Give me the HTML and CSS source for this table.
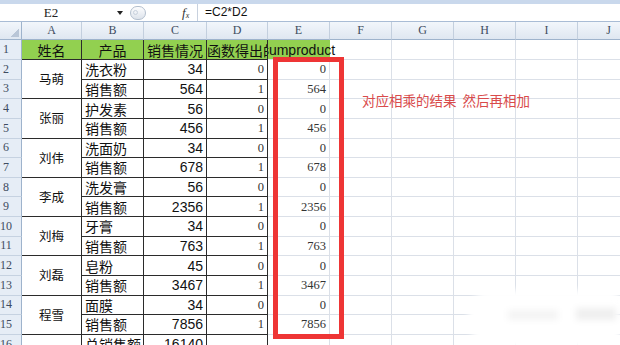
FILE: index.html
```html
<!DOCTYPE html>
<html lang="zh">
<head>
<meta charset="utf-8">
<title>sumproduct</title>
<link rel="stylesheet" href="styles.css">
</head>
<body>
<div class="fbar">
  <div class="namebox">E2</div>
  <div class="nb-arrow"></div>
  <div class="grip"><span class="grip-dot"></span></div>
  <div class="fx"><i>f<sub>x</sub></i></div>
  <div class="formula">=C2*D2</div>
</div>
<table class="sheet">
  <colgroup>
    <col class="w-rh"><col class="w-a"><col class="w-b"><col class="w-c"><col class="w-d">
    <col class="w-e"><col class="w-e"><col class="w-e"><col class="w-e"><col class="w-e"><col class="w-e">
  </colgroup>
  <tr class="hdr">
    <th class="corner"></th><th>A</th><th>B</th><th>C</th><th>D</th><th>E</th><th>F</th><th>G</th><th>H</th><th>I</th><th>J</th>
  </tr>
  <tr class="r1">
    <th class="rh">1</th>
    <td class="bd g ctr">姓名</td>
    <td class="bd g ctr">产品</td>
    <td class="bd g ctr">销售情况</td>
    <td class="bd g ctr">函数得出的</td>
    <td class="g e1"><div class="ovf"><span>sumproduct</span></div></td>
    <td></td><td></td><td></td><td></td><td></td>
  </tr>
  <tr><th class="rh">2</th><td class="bd name" rowspan="2">马萌</td><td class="bd prod">洗衣粉</td><td class="bd num">34</td><td class="bd sm">0</td><td class="sm">0</td><td></td><td></td><td></td><td></td><td></td></tr>
  <tr><th class="rh">3</th><td class="bd prod">销售额</td><td class="bd num">564</td><td class="bd sm">1</td><td class="sm">564</td><td></td><td></td><td></td><td></td><td></td></tr>
  <tr><th class="rh">4</th><td class="bd name" rowspan="2">张丽</td><td class="bd prod">护发素</td><td class="bd num">56</td><td class="bd sm">0</td><td class="sm">0</td><td></td><td></td><td></td><td></td><td></td></tr>
  <tr><th class="rh">5</th><td class="bd prod">销售额</td><td class="bd num">456</td><td class="bd sm">1</td><td class="sm">456</td><td></td><td></td><td></td><td></td><td></td></tr>
  <tr><th class="rh">6</th><td class="bd name" rowspan="2">刘伟</td><td class="bd prod">洗面奶</td><td class="bd num">34</td><td class="bd sm">0</td><td class="sm">0</td><td></td><td></td><td></td><td></td><td></td></tr>
  <tr><th class="rh">7</th><td class="bd prod">销售额</td><td class="bd num">678</td><td class="bd sm">1</td><td class="sm">678</td><td></td><td></td><td></td><td></td><td></td></tr>
  <tr><th class="rh">8</th><td class="bd name" rowspan="2">李成</td><td class="bd prod">洗发膏</td><td class="bd num">56</td><td class="bd sm">0</td><td class="sm">0</td><td></td><td></td><td></td><td></td><td></td></tr>
  <tr><th class="rh">9</th><td class="bd prod">销售额</td><td class="bd num">2356</td><td class="bd sm">1</td><td class="sm">2356</td><td></td><td></td><td></td><td></td><td></td></tr>
  <tr><th class="rh">10</th><td class="bd name" rowspan="2">刘梅</td><td class="bd prod">牙膏</td><td class="bd num">34</td><td class="bd sm">0</td><td class="sm">0</td><td></td><td></td><td></td><td></td><td></td></tr>
  <tr><th class="rh">11</th><td class="bd prod">销售额</td><td class="bd num">763</td><td class="bd sm">1</td><td class="sm">763</td><td></td><td></td><td></td><td></td><td></td></tr>
  <tr><th class="rh">12</th><td class="bd name" rowspan="2">刘磊</td><td class="bd prod">皂粉</td><td class="bd num">45</td><td class="bd sm">0</td><td class="sm">0</td><td></td><td></td><td></td><td></td><td></td></tr>
  <tr><th class="rh">13</th><td class="bd prod">销售额</td><td class="bd num">3467</td><td class="bd sm">1</td><td class="sm">3467</td><td></td><td></td><td></td><td></td><td></td></tr>
  <tr><th class="rh">14</th><td class="bd name" rowspan="2">程雪</td><td class="bd prod">面膜</td><td class="bd num">34</td><td class="bd sm">0</td><td class="sm">0</td><td></td><td></td><td></td><td></td><td></td></tr>
  <tr><th class="rh">15</th><td class="bd prod">销售额</td><td class="bd num">7856</td><td class="bd sm">1</td><td class="sm">7856</td><td></td><td></td><td></td><td></td><td></td></tr>
  <tr class="r16"><th class="rh">16</th><td class="bd"></td><td class="bd prod">总销售额</td><td class="bd num">16140</td><td class="bd"></td><td></td><td></td><td></td><td></td><td></td><td></td></tr>
</table>
<div class="highlight"></div>
<div class="note">对应相乘的结果&nbsp;&nbsp;然后再相加</div>
<div class="smudge"><span class="sm1"></span><span class="sm2"></span></div>
</body>
</html>
```
FILE: styles.css
```css
* { box-sizing: border-box; }
html, body { margin: 0; padding: 0; }
body {
  width: 620px;
  height: 345px;
  overflow: hidden;
  background: #fff;
  position: relative;
  font-family: "Noto Sans CJK SC", "Liberation Sans", sans-serif;
  color: #111;
}

/* formula bar */
.fbar {
  display: flex;
  align-items: center;
  height: 22px;
  border-top: 4px solid #c9d8ec;
  border-bottom: 1px solid #a9bcd5;
  background: #fff;
}
.namebox {
  width: 102px;
  text-align: center;
  font: 13px "Liberation Serif", serif;
  color: #222;
}
.nb-arrow {
  margin-left: 15px;
  width: 0;
  height: 0;
  border-left: 3px solid transparent;
  border-right: 3px solid transparent;
  border-top: 4px solid #222;
}
.grip {
  margin-left: 7px;
  width: 16px;
  height: 14px;
  border: 1px solid #b3bfce;
  border-radius: 7px;
  background: linear-gradient(#fdfdfe, #dde3eb);
  display: flex;
  align-items: center;
  padding-left: 2px;
}
.grip-dot {
  width: 5px;
  height: 5px;
  border-radius: 50%;
  border: 1px solid #c7d0dc;
}
.fx {
  margin-left: 36px;
  width: 15px;
  font: italic 13px "Liberation Serif", serif;
  color: #333;
}
.fx sub { font-size: 8px; vertical-align: -1px; }
.formula {
  height: 17px;
  border-left: 1px solid #c8d1de;
  padding-left: 7px;
  font: 12px "Liberation Sans", sans-serif;
  line-height: 17px;
  color: #111;
}

/* sheet */
.sheet {
  border-collapse: separate;
  border-spacing: 0;
  table-layout: fixed;
  width: 640px;
}
.w-rh { width: 22px; }
.w-a { width: 60px; }
.w-b { width: 62px; }
.w-c { width: 63px; }
.w-d { width: 61px; }
.w-e { width: 62px; }

.sheet td, .sheet th {
  padding: 0;
  height: 19.64px;
  line-height: 16px;
  border-right: 1px solid #dbe0e8;
  border-bottom: 1px solid #dbe0e8;
  overflow: hidden;
  white-space: nowrap;
  vertical-align: middle;
  font-weight: normal;
}
.sheet .hdr th {
  height: 18px;
  background: linear-gradient(#f2f6fb, #dfe7f1);
  border-right: 1px solid #c3cfde;
  border-bottom: 1px solid #9eb3cc;
  font: 12px "Liberation Serif", serif;
  color: #3e4c60;
  text-align: center;
}
.sheet .hdr th.corner {
  background:
    linear-gradient(135deg, transparent 50%, #b9c6d7 50%) right 2px bottom 2px / 9px 9px no-repeat,
    linear-gradient(#f2f6fb, #dfe7f1);
  border-right-color: #9eb3cc;
}
.sheet .r1 td, .sheet .r1 th { height: 20px; }
.sheet .r16 td, .sheet .r16 th { height: 20px; }
.sheet th.rh {
  background: #e6edf6;
  border-right: 1px solid #9eb3cc;
  border-bottom: 1px solid #c6d2e1;
  font: 12px "Liberation Serif", serif;
  color: #3e4c60;
  text-align: center;
  padding-right: 9px;
}

.sheet td.bd { border-right-color: #2b2b2b; border-bottom-color: #2b2b2b; }
.sheet td.g { background: #92d050; font-size: 14px; color: #111; }
.sheet td.ctr { text-align: center; }
.sheet td.e1 {
  overflow: visible;
  border-right-color: #92d050;
  clip-path: inset(0 -120px 0 0);
}
.ovf {
  display: flex;
  justify-content: center;
  width: 100%;
  font: 14px "Liberation Sans", sans-serif;
  color: #111;
}
.ovf span { flex: none; }

.name { text-align: center; font-size: 12.5px; }
.prod { text-align: left; padding-left: 3px !important; font-size: 14px; }
.num { text-align: right; padding-right: 3px !important; font: 14px "Liberation Sans", sans-serif; color: #111; }
.sm { text-align: right; padding-right: 3px !important; font: 12.5px "Liberation Serif", serif; color: #333; }

/* annotations */
.highlight {
  position: absolute;
  left: 273px;
  top: 57px;
  width: 71px;
  height: 282px;
  border: 5.5px solid #ee3535;
}
.note {
  position: absolute;
  left: 362px;
  top: 90px;
  font: 13.5px "Noto Sans CJK SC", sans-serif;
  line-height: 20px;
  color: #d94b4b;
  white-space: nowrap;
}
.smudge {
  position: absolute;
  left: 468px;
  top: 290px;
  width: 152px;
  height: 58px;
  background: #fff;
  border-radius: 24px 10px 0 28px;
  filter: blur(3px);
}
.sm1, .sm2 {
  position: absolute;
  background: #efefef;
}
.sm1 { left: 108px; top: 18px; width: 40px; height: 12px; }
.sm2 { left: 40px; top: 20px; width: 50px; height: 10px; background: #f4f4f4; }
```
